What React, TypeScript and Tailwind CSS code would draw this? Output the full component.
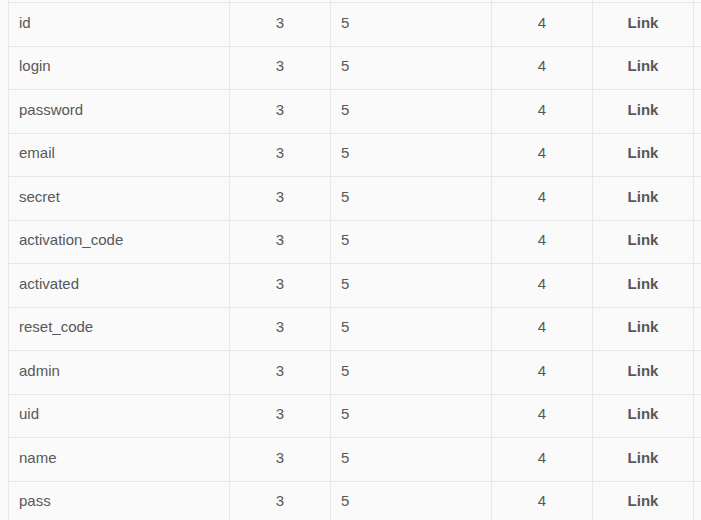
import React from "react";

const fields = [
  "id",
  "login",
  "password",
  "email",
  "secret",
  "activation_code",
  "activated",
  "reset_code",
  "admin",
  "uid",
  "name",
  "pass",
];

const Row = ({ name }: { name: string }) => {
  return (
    <div className="flex h-[43.5px] border-b border-[#e8e8e8]">
      <div className="w-[222px] border-l border-r border-[#e8e8e8] flex items-center pl-[10px] pb-[3px]">
        {name}
      </div>
      <div className="w-[101px] border-r border-[#e8e8e8] flex items-center justify-center pb-[3px]">
        3
      </div>
      <div className="w-[161px] border-r border-[#e8e8e8] flex items-center pl-[10px] pb-[3px]">
        5
      </div>
      <div className="w-[101px] border-r border-[#e8e8e8] flex items-center justify-center pb-[3px]">
        4
      </div>
      <div className="w-[101px] border-r border-[#e8e8e8] flex items-center justify-center font-bold pb-[3px]">
        Link
      </div>
    </div>
  );
};

export default function App() {
  return (
    <div
      className="w-[701px] h-[520px] overflow-hidden bg-[#fafafa] text-[15px] text-[#585858] pl-[8px]"
      style={{ fontFamily: '"Liberation Sans", Arial, sans-serif' }}
    >
      {/* tail of the row above, cut off by the viewport */}
      <div className="flex h-[3px] border-b border-[#e8e8e8]">
        <div className="w-[222px] border-l border-r border-[#e8e8e8]"></div>
        <div className="w-[101px] border-r border-[#e8e8e8]"></div>
        <div className="w-[161px] border-r border-[#e8e8e8]"></div>
        <div className="w-[101px] border-r border-[#e8e8e8]"></div>
        <div className="w-[101px] border-r border-[#e8e8e8]"></div>
      </div>
      {fields.map((f) => (
        <Row key={f} name={f} />
      ))}
    </div>
  );
}
